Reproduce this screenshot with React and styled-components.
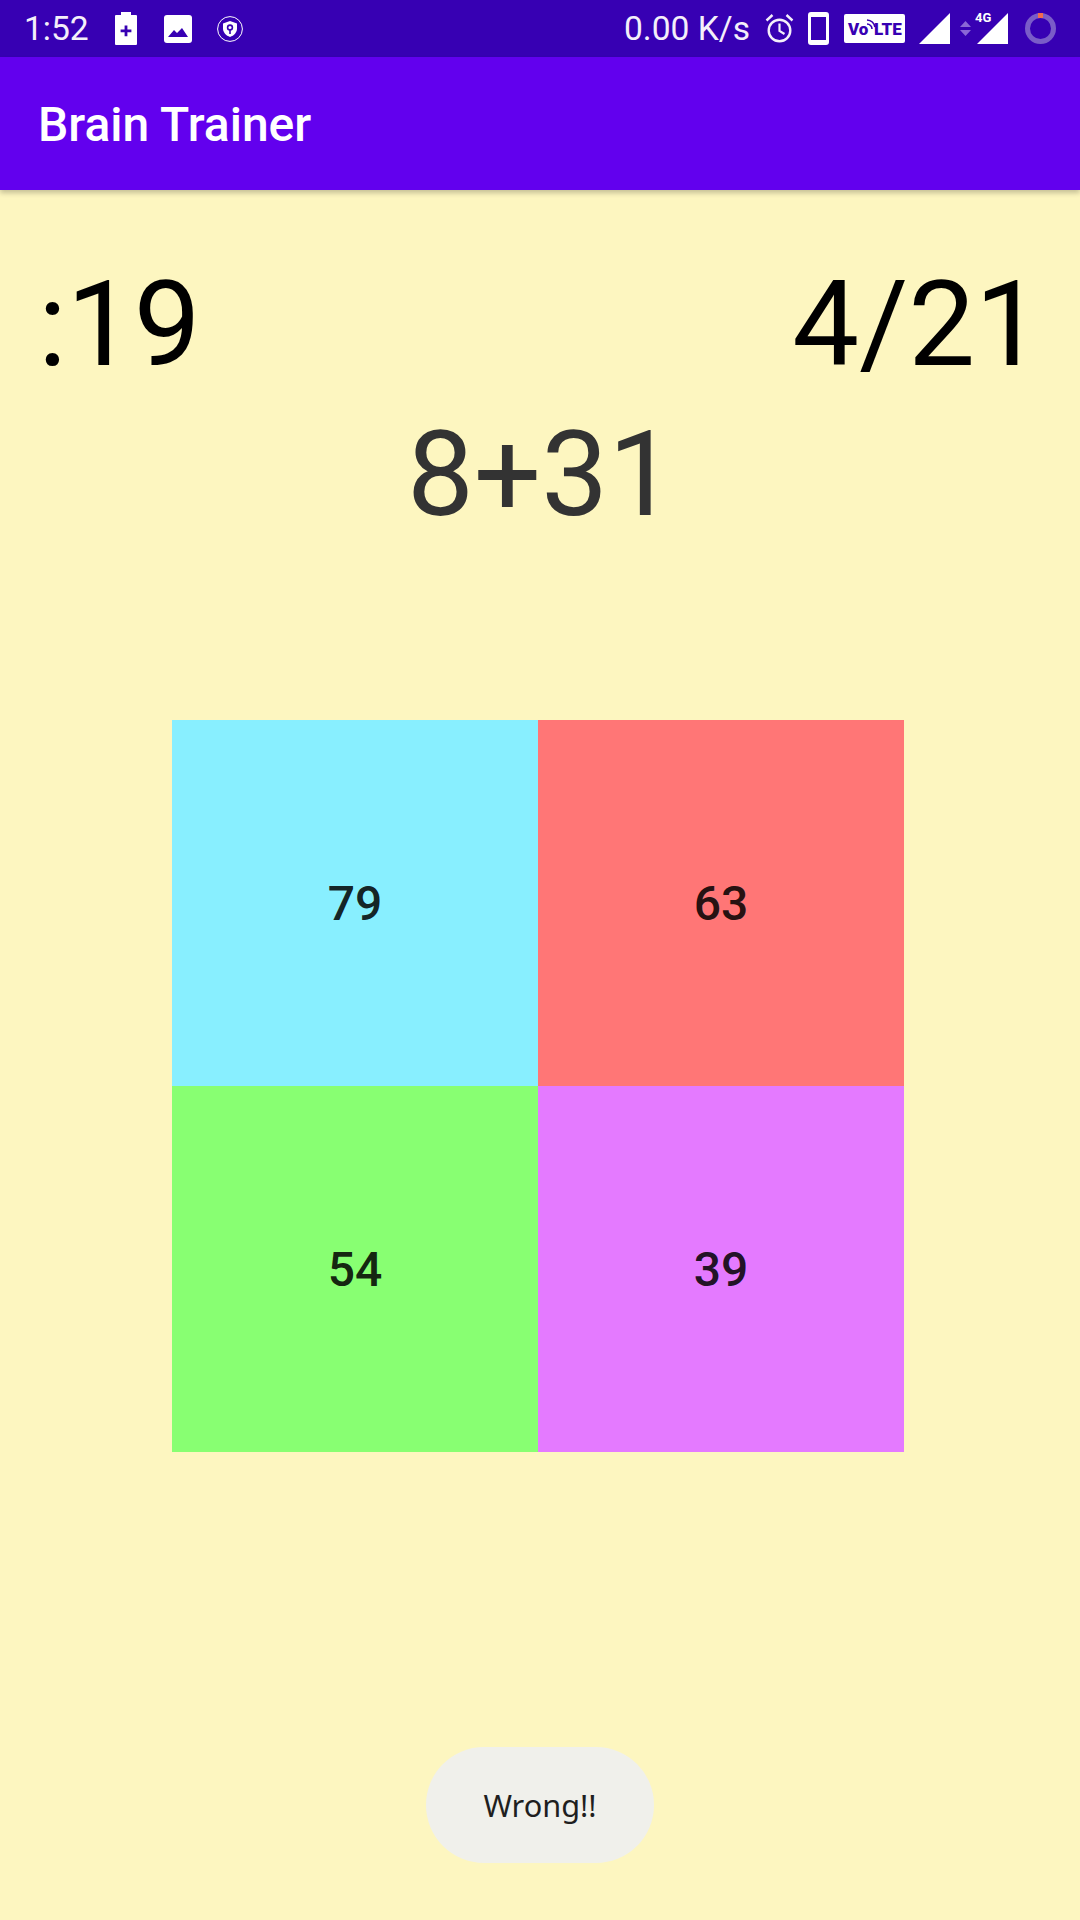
import React from 'react';
import styled, { createGlobalStyle } from 'styled-components';

const GlobalStyle = createGlobalStyle`
  html, body {
    margin: 0;
    padding: 0;
    background: #fdf6c0;
  }
  body {
    font-family: Roboto, "Liberation Sans", sans-serif;
  }
`;

const Screen = styled.div`
  position: relative;
  width: 1080px;
  height: 1920px;
  overflow: hidden;
  background: #fdf6c0;
  display: flex;
  flex-direction: column;
`;

const StatusBar = styled.div`
  height: 57px;
  background: #3700b3;
  display: flex;
  align-items: center;
  justify-content: space-between;
  padding: 0 24px;
  box-sizing: border-box;
  color: #fff;
  flex-shrink: 0;
`;

const StatusGroup = styled.div`
  display: flex;
  align-items: center;
`;

const StatusText = styled.span`
  font-size: 33.6px;
  line-height: 56px;
  color: #f4effa;
  margin-right: ${(p) => p.$gap || 0}px;
`;

const Icon = styled.svg`
  display: block;
  flex-shrink: 0;
  margin-right: ${(p) => p.$gap || 0}px;
`;

const AppBar = styled.header`
  height: 133px;
  box-sizing: border-box;
  padding: 1px 0 0 38px;
  background: #6200ee;
  display: flex;
  align-items: center;
  box-shadow: 0 3px 5px rgba(0, 0, 0, 0.22);
  position: relative;
  flex-shrink: 0;
`;

const Title = styled.h1`
  margin: 0;
  font-size: 48px;
  font-weight: 500;
  color: #fff;
`;

const Body = styled.main`
  display: flex;
  flex-direction: column;
  flex: 1;
`;

const TopRow = styled.div`
  display: flex;
  justify-content: space-between;
  padding: 65px 38px 0 38px;
`;

const BigText = styled.div`
  font-size: 119px;
  line-height: 140px;
  color: #000;
`;

const Question = styled.div`
  font-size: 119px;
  line-height: 140px;
  color: #333;
  text-align: center;
  margin-top: 10px;
  padding-left: 2px;
`;

const Grid = styled.div`
  display: grid;
  grid-template-columns: repeat(2, 366px);
  grid-auto-rows: 366px;
  justify-content: center;
  margin-top: 175px;
  padding-right: 4px;
`;

const Choice = styled.button`
  border: 0;
  padding: 1px 0 0;
  margin: 0;
  background: ${(p) => p.$color};
  font-family: inherit;
  font-size: 48px;
  font-weight: 500;
  color: rgba(0, 0, 0, 0.87);
  display: flex;
  align-items: center;
  justify-content: center;
`;

const Toast = styled.div`
  position: absolute;
  left: 426px;
  top: 1747px;
  width: 228px;
  height: 116px;
  border-radius: 58px;
  background: #f0f0eb;
  color: #1f1f1f;
  font-family: "Noto Sans", Roboto, sans-serif;
  font-size: 30.7px;
  display: flex;
  align-items: center;
  justify-content: center;
`;

const choices = [
  { value: 79, color: '#88efff' },
  { value: 63, color: '#ff7676' },
  { value: 54, color: '#88ff72' },
  { value: 39, color: '#e47aff' },
];

function StatusIconsLeft() {
  return (
    <>
      <Icon $gap={27} width="22" height="33" viewBox="0 0 22 33">
        <path fill="#fff" d="M6 0h10v3h5a1 1 0 0 1 1 1v28a1 1 0 0 1-1 1H1a1 1 0 0 1-1-1V4a1 1 0 0 1 1-1h5z" />
        <path fill="#3700b3" d="M9.6 13.5h2.8v4h4v2.8h-4v4H9.6v-4h-4v-2.8h4z" />
      </Icon>
      <Icon $gap={25} width="28" height="28" viewBox="0 0 28 28">
        <rect width="28" height="28" rx="3" fill="#fff" />
        <path fill="#3700b3" d="M4 22l6-7 3 3 5-5 6 9z" />
      </Icon>
      <Icon width="26" height="26" viewBox="0 0 26 26">
        <circle cx="13" cy="13" r="12.4" fill="none" stroke="#fff" strokeWidth="1" />
        <path fill="#fff" d="M13 5l7 2.6v5c0 4-3 7.2-7 8.4-4-1.2-7-4.4-7-8.4v-5z" />
        <circle cx="13" cy="11.5" r="2.4" fill="none" stroke="#3700b3" strokeWidth="1.6" />
        <path stroke="#3700b3" strokeWidth="1.6" d="M13 14v4" />
      </Icon>
    </>
  );
}

function StatusIconsRight() {
  return (
    <>
      <StatusText $gap={15}>0.00 K/s</StatusText>
      <Icon $gap={14} width="29" height="31" viewBox="0 0 29 31">
        <circle cx="14.5" cy="17.5" r="10.8" fill="none" stroke="#f4effa" strokeWidth="2.4" />
        <path d="M14.5 10.5v7.5l5 3" fill="none" stroke="#f4effa" strokeWidth="2.2" />
        <path d="M1.5 7.5l6-5.5M27.5 7.5l-6-5.5" stroke="#f4effa" strokeWidth="2.4" />
      </Icon>
      <Icon $gap={15} width="21" height="33" viewBox="0 0 21 33">
        <path fill="#fff" fillRule="evenodd" d="M3 0h15a3 3 0 0 1 3 3v27a3 3 0 0 1-3 3H3a3 3 0 0 1-3-3V3a3 3 0 0 1 3-3zM3 5v23h15V5z" />
      </Icon>
      <Icon $gap={14} width="61" height="29" viewBox="0 0 61 29">
        <rect width="61" height="29" rx="2" fill="#fff" />
        <text x="4" y="21" fontFamily="Roboto, sans-serif" fontSize="17" fontWeight="900" fill="#3700b3">Vo</text>
        <path d="M23 10a5 5 0 0 1 5 5M23 6a9 9 0 0 1 8 7" fill="none" stroke="#3700b3" strokeWidth="1.6" />
        <text x="30" y="21" fontFamily="Roboto, sans-serif" fontSize="17" fontWeight="900" fill="#3700b3">LTE</text>
      </Icon>
      <Icon $gap={10} width="31" height="31" viewBox="0 0 31 31">
        <path fill="#fff" d="M31 0v31H0z" />
      </Icon>
      <Icon $gap={4} width="11" height="15" viewBox="0 0 11 15">
        <path fill="#8a66d6" d="M5.5 0L11 6H0zM5.5 15L0 9h11z" />
      </Icon>
      <Icon $gap={17} width="33" height="39" viewBox="0 0 33 39">
        <path fill="#fff" d="M33 4v31H2z" />
        <text x="0" y="13" fontFamily="Roboto, sans-serif" fontSize="13" fontWeight="700" fill="#fff">4G</text>
      </Icon>
      <Icon width="31" height="31" viewBox="0 0 31 31">
        <circle cx="15.5" cy="15.5" r="13" fill="none" stroke="#7a5cc8" strokeWidth="5" />
        <path d="M15.5 0v5" stroke="#f26a4f" strokeWidth="5" />
      </Icon>
    </>
  );
}

export default function App() {
  return (
    <>
      <GlobalStyle />
      <Screen>
        <StatusBar>
          <StatusGroup>
            <StatusText $gap={26}>1:52</StatusText>
            <StatusIconsLeft />
          </StatusGroup>
          <StatusGroup>
            <StatusIconsRight />
          </StatusGroup>
        </StatusBar>
        <AppBar>
          <Title>Brain Trainer</Title>
        </AppBar>
        <Body>
          <TopRow>
            <BigText>:19</BigText>
            <BigText>4/21</BigText>
          </TopRow>
          <Question>8+31</Question>
          <Grid>
            {choices.map((c) => (
              <Choice key={c.value} $color={c.color}>{c.value}</Choice>
            ))}
          </Grid>
        </Body>
        <Toast>Wrong!!</Toast>
      </Screen>
    </>
  );
}
